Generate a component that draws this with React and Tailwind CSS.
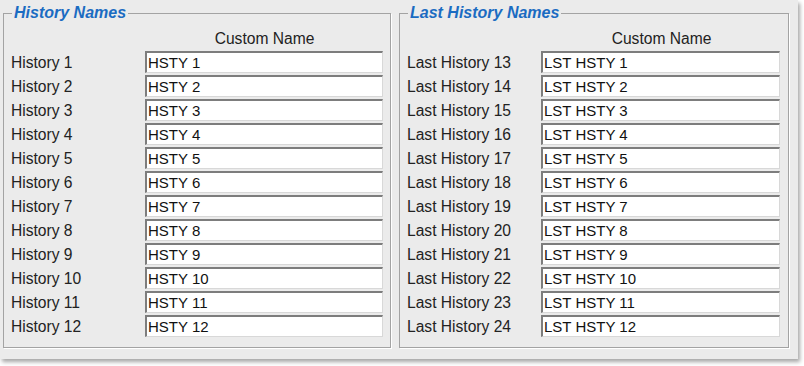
import React from "react";

function Box({ title, labels, values, wide }) {
  return (
    <fieldset
      className={`border border-[#a3a3a3] shadow-[1px_1px_0_#ffffff] pl-[7px] pr-[6px] pb-[9px] ${wide ? "w-[390px]" : "w-[388px]"}`}
    >
      <legend className="ml-[1px] px-[2px] text-[16px] leading-[18px] font-bold italic text-[#1b6cc2]">
        {title}
      </legend>
      <div className="flex h-[28px] pt-[8px]">
        <div className="w-[134px]" />
        <div className="flex-1 text-center text-[15.6px] leading-[18px] text-[#222]">Custom Name</div>
      </div>
      {labels.map((l, i) => (
        <div key={i} className="flex h-[24px] items-center">
          <div className="w-[134px] mt-[2px] text-[15.6px] leading-[18px] text-[#222]">{l}</div>
          <div className={`h-[22px] ${wide ? "w-[239px]" : "w-[238px]"} bg-white border-t-2 border-l-2 border-[#7d7d7d] border-r border-b border-r-[#d8d8d8] border-b-[#d8d8d8] pl-[1px] text-[15px] leading-[19px] text-[#111]`}>
            {values[i]}
          </div>
        </div>
      ))}
    </fieldset>
  );
}

export default function App() {
  const l1 = Array.from({ length: 12 }, (_, i) => `History ${i + 1}`);
  const v1 = Array.from({ length: 12 }, (_, i) => `HSTY ${i + 1}`);
  const l2 = Array.from({ length: 12 }, (_, i) => `Last History ${i + 13}`);
  const v2 = Array.from({ length: 12 }, (_, i) => `LST HSTY ${i + 1}`);
  return (
    <div className="w-[804px] h-[366px] bg-white" style={{ fontFamily: '"Liberation Sans", Arial, sans-serif' }}>
      <div className="w-[798px] h-[359px] bg-[#ebebeb] shadow-[2px_3px_4px_rgba(0,0,0,0.35)] flex items-start gap-[8px] pl-[3px] pt-[4px]">
        <Box title="History Names" labels={l1} values={v1} />
        <Box title="Last History Names" labels={l2} values={v2} wide />
      </div>
    </div>
  );
}
